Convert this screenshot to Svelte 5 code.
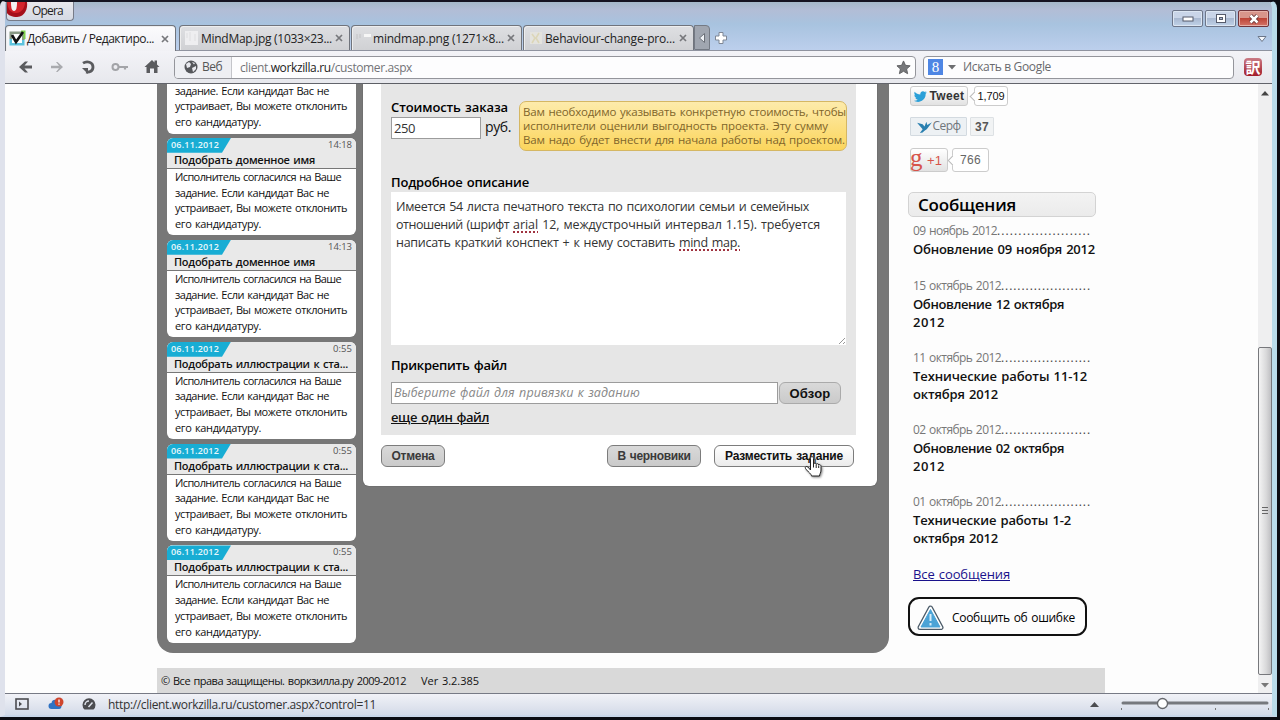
<script>
    // stretches or tightens a line of text to the given width
    function fit(node, width) {
        const natural = node.getBoundingClientRect().width
        const count = Array.from(node.textContent).length
        node.style.letterSpacing = (width - natural) / count + "px"
    }

    const tabs = [
        { title: "Добавить / Редактиро...", width: 127, icon: "check" },
        { title: "MindMap.jpg (1033×23...", width: 131, icon: "page" },
        { title: "mindmap.png (1271×8...", width: 131, icon: "faint" },
        { title: "Behaviour-change-pro...", width: 130, icon: "star" },
    ]

    const domain = { title: "Подобрать доменное имя", width: 141 }
    const pictures = { title: "Подобрать иллюстрации к ста...", width: 174 }

    const cards = [
        { ...domain, time: "14:18", timeWidth: 24 },
        { ...domain, time: "14:13", timeWidth: 24 },
        { ...pictures, time: "0:55", timeWidth: 19 },
        { ...pictures, time: "0:55", timeWidth: 19 },
        { ...pictures, time: "0:55", timeWidth: 19 },
    ]

    const notice = [
        ["Исполнитель согласился на Ваше", 166],
        ["задание. Если кандидат Вас не", 154],
        ["устраивает, Вы можете отклонить", 172],
        ["его кандидатуру.", 86],
    ]

    const tip = [
        ["Вам необходимо указывать конкретную стоимость, чтобы", 323],
        ["исполнители оценили выгодность проекта. Эту сумму", 305],
        ["Вам надо будет внести для начала работы над проектом.", 322],
    ]

    // third value marks a word underlined by the spell checker
    const description = [
        [["Имеется 54 листа печатного текста по психологии семьи и семейных", 413]],
        [["отношений (шрифт ", 117], ["arial", 25, true], [" 12, междустрочный интервал 1.15). требуется", 282]],
        [["написать краткий конспект + к нему составить ", 283], ["mind map.", 61, true]],
    ]

    const messages = [
        { date: "09 ноябрь 2012", dateWidth: 84, dotsWidth: 94, lines: [["Обновление 09 ноября 2012", 182]] },
        { date: "15 октябрь 2012", dateWidth: 88, dotsWidth: 90, lines: [["Обновление 12 октября", 151], ["2012", 32]] },
        { date: "11 октябрь 2012", dateWidth: 88, dotsWidth: 90, lines: [["Технические работы 11-12", 174], ["октября 2012", 85]] },
        { date: "02 октябрь 2012", dateWidth: 88, dotsWidth: 90, lines: [["Обновление 02 октября", 151], ["2012", 32]] },
        { date: "01 октябрь 2012", dateWidth: 88, dotsWidth: 90, lines: [["Технические работы 1-2", 158], ["октября 2012", 85]] },
    ]
</script>

<div class="window">
    <header>
        <div class="titlebar">
            <div class="opera">
                <svg width="21" height="16" viewBox="0 0 21 16">
                    <path d="M0 0h20c1 6-2 15-10 15C5 15 1 13 0 11z" fill="#a50f1a" />
                    <path d="M0 0h18c0 5-3 11-9 11S1 7 0 0z" fill="#d3242c" />
                    <path d="M4 0h6c0 5-.5 9-3 9S4 5 4 0z" fill="#f4f2f4" />
                </svg>
                <span class="t" use:fit={31}>Opera</span>
            </div>
            <div class="controls">
                <span class="control"><svg width="12" height="6" viewBox="0 0 12 6"><rect x="1" y="1" width="10" height="4" fill="#fff" stroke="#555b6b" /></svg></span>
                <span class="control"><svg width="12" height="9" viewBox="0 0 12 9"><rect x="1.500" y=".5" width="9" height="8" fill="#fff" stroke="#555b6b" /><rect x="4.500" y="3.500" width="3" height="2" fill="#aab8d0" stroke="#555b6b" /></svg></span>
                <span class="control close"><svg width="12" height="10" viewBox="0 0 12 10"><path d="M2.500 1.500l7 7M9.500 1.500l-7 7" stroke="#5a2a2c" stroke-width="4" /><path d="M2.500 1.500l7 7M9.500 1.500l-7 7" stroke="#fff" stroke-width="2.500" /></svg></span>
            </div>
        </div>

        <div class="tabs">
            {#each tabs as tab, i}
                <div class="tab" class:active={i == 0}>
                    <span class="favicon">
                        {#if tab.icon == "check"}
                            <svg width="17" height="17" viewBox="0 0 17 17">
                                <path d="M2 9v5h12v-5" fill="none" stroke="#5cc3de" stroke-width="3" />
                                <path d="M2 9V3h12v7" fill="none" stroke="#8a9a86" stroke-width="3" />
                                <path d="M12 1.500h3.500V9" fill="none" stroke="#7fd04a" stroke-width="2" />
                                <rect x="3" y="4" width="10" height="9" fill="#fff" />
                                <path d="M3 5l4 7 7-10" fill="none" stroke="#111" stroke-width="2.600" />
                            </svg>
                        {:else if tab.icon == "page"}
                            <svg width="16" height="16" viewBox="0 0 16 16"><rect x="1" y="1" width="13" height="14" fill="#eeeef0" /><path d="M3 3v5M6 2v9M11 4v7" stroke="#dedee0" /></svg>
                        {:else if tab.icon == "faint"}
                            <svg width="16" height="16" viewBox="0 0 16 16"><path d="M1 4v5M4 4v4" stroke="#cacacc" stroke-width="1.500" /><rect x="8" y="4" width="7" height="3" fill="#f6f6f6" /></svg>
                        {:else}
                            <svg width="16" height="16" viewBox="0 0 16 16"><rect x="2" y="2" width="12" height="12" fill="#e4e3de" /><path d="M4 4l3 4-3 5M11 3L8 8l3 5" fill="none" stroke="#dcd6b8" stroke-width="1.600" /></svg>
                        {/if}
                    </span>
                    <span class="t" use:fit={tab.width}>{tab.title}</span>
                    <svg class="cross" width="8" height="8" viewBox="0 0 8 8"><path d="M1 1l6 6M7 1L1 7" stroke="#77787c" stroke-width="1.700" /></svg>
                </div>
            {/each}
            <div class="scroll"><svg width="8" height="12" viewBox="0 0 8 12"><path d="M6.500 1.500v9L1.500 6z" fill="#eef1f5" stroke="#6b7078" /></svg></div>
            <svg class="plus" width="14" height="14" viewBox="0 0 14 14"><path d="M5 1.500h4V5h3.500v4H9v3.500H5V9H1.500V5H5z" fill="#fff" stroke="#7f8795" /></svg>
            <svg class="chevron" width="10" height="8" viewBox="0 0 10 8"><path d="M1 1.500h8L5 6.500z" fill="#f5f8fc" stroke="#6c7789" /></svg>
        </div>

        <div class="toolbar">
            <div class="nav">
                <svg width="16" height="14" viewBox="0 0 16 14"><path d="M1 7l6-5.500h3L6.500 5.500H14v3H6.500L10 12.500H7z" fill="#5a5b5e" /></svg>
                <svg width="16" height="14" viewBox="0 0 16 14"><path d="M14 7L8.500 2H7l3 3.800H2v2.400h8L7 12h1.500z" fill="#a9aaae" /></svg>
                <svg width="16" height="16" viewBox="0 0 16 16"><path d="M3 4.200C7 1.500 13 3 13 8c0 4-3.500 5.500-7 5" fill="none" stroke="#5a5b5e" stroke-width="2.800" /><path d="M2 9h6v6z" fill="#5a5b5e" /></svg>
                <svg width="18" height="12" viewBox="0 0 18 12"><circle cx="4.500" cy="6" r="3" fill="none" stroke="#a3a4a8" stroke-width="2" /><path d="M7.500 6H17M14 6v2.500" stroke="#a3a4a8" stroke-width="2.200" /></svg>
                <svg width="16" height="15" viewBox="0 0 16 15"><path d="M8 1l2.500 2.500V1.500h2.500v4L15.500 8h-2v6H10V9.500H6V14H2.500V8h-2z" fill="#5a5b5e" /></svg>
            </div>
            <div class="address">
                <div class="badge">
                    <svg width="14" height="14" viewBox="0 0 14 14"><circle cx="7" cy="7" r="6.500" fill="#55575b" /><path d="M2 4l3-2 2 2-1 3-3 1zM8 8l4-2v3l-3 3zM8 2l3 1-1 1.500z" fill="#e8e9ee" /></svg>
                    <span class="t" use:fit={20}>Веб</span>
                </div>
                <div class="url"><span class="t" use:fit={172}>client.<b>workzilla.ru</b>/customer.aspx</span></div>
                <svg width="15" height="15" viewBox="0 0 16 16"><path d="M8 1l2.100 4.700 5 .5-3.800 3.400 1.100 5L8 12l-4.400 2.600 1.100-5L1 6.200l5-.5z" fill="#77787b" stroke="#5f6062" /></svg>
            </div>
            <div class="search">
                <span class="google">8</span>
                <svg width="8" height="5" viewBox="0 0 8 5"><path d="M0 0h8L4 4.500z" fill="#6d6e71" /></svg>
                <span class="t" use:fit={88}>Искать в Google</span>
            </div>
            <div class="translate">訳</div>
        </div>
    </header>

    <div class="view">
        <div class="page">
            <div class="content">
                <div class="board">
                    <aside class="cards">
                        <div class="card tail">
                            <div class="card-text">
                                {#each notice.slice(1) as [line, width]}
                                    <div><span class="t" use:fit={width}>{line}</span></div>
                                {/each}
                            </div>
                        </div>
                        {#each cards as card}
                            <div class="card">
                                <div class="card-head">
                                    <div class="stamp">
                                        <span class="date"><span class="t" use:fit={48}>06.11.2012</span></span>
                                        <span class="t time" use:fit={card.timeWidth}>{card.time}</span>
                                    </div>
                                    <span class="t card-title" use:fit={card.width}>{card.title}</span>
                                </div>
                                <div class="card-text">
                                    {#each notice as [line, width]}
                                        <div><span class="t" use:fit={width}>{line}</span></div>
                                    {/each}
                                </div>
                            </div>
                        {/each}
                    </aside>

                    <main>
                        <div class="form">
                            <div class="price">
                                <div class="amount">
                                    <div class="label"><span class="t" use:fit={117}>Стоимость заказа</span><i>*</i></div>
                                    <div class="sum"><div class="input"><span class="t" use:fit={21}>250</span></div><span class="t unit" use:fit={26}>руб.</span></div>
                                </div>
                                <div class="tip">
                                    {#each tip as [line, width]}
                                        <div><span class="t" use:fit={width}>{line}</span></div>
                                    {/each}
                                </div>
                            </div>
                            <div class="label"><span class="t" use:fit={138}>Подробное описание</span></div>
                            <div class="textarea">
                                {#each description as parts}
                                    <div class="row">
                                        {#each parts as [text, width, misspelt]}
                                            <span class="t" class:misspelt use:fit={width}>{text}</span>
                                        {/each}
                                    </div>
                                {/each}
                                <svg class="grip" width="8" height="8" viewBox="0 0 8 8"><path d="M1 7l6-6M5 7l2-2" stroke="#999" /></svg>
                            </div>
                            <div class="label attach"><span class="t" use:fit={116}>Прикрепить файл</span></div>
                            <div class="file">
                                <div class="input wide"><span class="t" use:fit={246}>Выберите файл для привязки к заданию</span></div>
                                <div class="button browse"><span class="t" use:fit={41}>Обзор</span></div>
                            </div>
                            <div class="more"><span class="t" use:fit={98}>еще один файл</span></div>
                        </div>
                        <div class="actions">
                            <div class="button cancel"><span class="t" use:fit={43}>Отмена</span></div>
                            <div class="button draft"><span class="t" use:fit={73}>В черновики</span></div>
                            <div class="button publish">
                                <span class="t" use:fit={118}>Разместить задание</span>
                                <svg class="hand" width="18" height="24" viewBox="0 0 18 24">
                                    <path d="M6.500 15V3.500c0-2.600 3-2.600 3 0V9c.5-1.300 2.500-1.200 2.700.3.700-1 2.300-.8 2.500.6 1-.7 2.300 0 2.300 1.600V15c0 3-1.500 4-1.500 6h-8C7.500 19 4 17 1.500 13.500c-.9-1.700 1-2.800 2.400-1.500z" fill="#fff" stroke="#222" />
                                    <path d="M9.500 9v3.500M12.200 9.500v3.500M14.700 10.500V13" stroke="#222" />
                                </svg>
                            </div>
                        </div>
                    </main>
                </div>

                <aside class="side">
                    <div class="share">
                        <div class="pill tweet">
                            <svg width="13" height="11" viewBox="0 0 24 20"><path d="M24 2.500l-2.500 2.600C22 14 14 20 7.500 20 4.500 20 2 19 0 17.800c2.500.2 5-.4 7-2-2-.1-4-1.500-4.500-3.500h2C2 11.500.6 9.500.6 7.300l2 .7C.5 6.500 0 3.500 1.300 1.300 4 4.500 7.500 6.300 11.700 6.500 10.500 1.500 16.500-2 20 1.600L23 .5l-2 2.700z" fill="#2ca0d8" /></svg>
                            <span class="t" use:fit={35}>Tweet</span>
                        </div>
                        <div class="count tweets"><span class="t" use:fit={27}>1,709</span></div>
                    </div>
                    <div class="share">
                        <div class="pill surf">
                            <svg width="15" height="13" viewBox="0 0 16 14"><path d="M0 3l6 1.500L8 7l2-5 1 3.500 5-3-4.500 6C9.500 11 8 11 6 13.500L3 14l3-4z" fill="#2a80b0" /></svg>
                            <span class="t" use:fit={28}>Серф</span>
                        </div>
                        <div class="count surfs"><span class="t" use:fit={14}>37</span></div>
                    </div>
                    <div class="share">
                        <div class="pill plusone"><span class="g">g</span><span class="t" use:fit={15}>+1</span></div>
                        <div class="count pluses"><span class="t" use:fit={21}>766</span></div>
                    </div>

                    <h2><span class="t" use:fit={98}>Сообщения</span></h2>
                    <div class="messages">
                        {#each messages as message}
                            <div class="message">
                                <div class="when"><span class="t" use:fit={message.dateWidth}>{message.date}</span><span class="t dots" use:fit={message.dotsWidth}>......................</span></div>
                                {#each message.lines as [line, width]}
                                    <div><span class="t" use:fit={width}>{line}</span></div>
                                {/each}
                            </div>
                        {/each}
                        <div class="all"><span class="t" use:fit={97}>Все сообщения</span></div>
                    </div>
                    <div class="report">
                        <svg width="27" height="26" viewBox="0 0 27 26">
                            <path d="M13.500 3L24 22.500H3z" fill="#4a5a68" stroke="#4a5a68" stroke-width="5" stroke-linejoin="round" />
                            <path d="M13.500 3L24 22.500H3z" fill="#fff" stroke="#fff" stroke-width="2.600" stroke-linejoin="round" />
                            <path d="M13.500 4.500L23 22H4z" fill="#4ba3d6" stroke="#4ba3d6" stroke-linejoin="round" />
                            <path d="M13.500 9v7M13.500 18v2.500" stroke="#d6ecf8" stroke-width="2" />
                        </svg>
                        <span class="t" use:fit={123}>Сообщить об ошибке</span>
                    </div>
                </aside>
            </div>
            <footer>
                <span class="t" use:fit={245}>© Все права защищены. воркзилла.ру 2009-2012</span>
                <span class="t" use:fit={58}>Ver 3.2.385</span>
            </footer>
        </div>
        <div class="scrollbar">
            <svg width="8" height="5" viewBox="0 0 8 5"><path d="M0 4.500h8L4 0z" fill="#444" /></svg>
            <div class="thumb"><svg width="8" height="8" viewBox="0 0 8 8"><path d="M1 .5h6M1 3.500h6M1 6.500h6" stroke="#666" /></svg></div>
            <svg width="8" height="5" viewBox="0 0 8 5"><path d="M0 0h8L4 4.500z" fill="#777" /></svg>
        </div>
    </div>

    <div class="status">
        <svg width="14" height="12" viewBox="0 0 14 12"><rect x="1" y="1" width="12" height="10" fill="none" stroke="#4b4c50" stroke-width="1.600" /><path d="M4 3.500v5L7 6z" fill="#4b4c50" /></svg>
        <svg width="16" height="14" viewBox="0 0 16 14"><path d="M3.500 12a3 3 0 0 1 0-6C4 2 9 2 10 5c4-.500 5 7 1 7z" fill="#2f73c4" /><circle cx="11" cy="5" r="4.500" fill="#cf452d" /><path d="M11 2.500v3M11 6.500v1.300" stroke="#fff" stroke-width="1.300" /></svg>
        <svg width="14" height="12" viewBox="0 0 14 12"><path d="M2.500 11.500a6.500 6.500 0 1 1 9 0z" fill="#4b4c50" /><path d="M3 7a4 4 0 0 1 4-4M6.500 9l4-4.500" stroke="#e0e3ec" stroke-width="1.500" fill="none" /></svg>
        <span class="t" use:fit={268}>http://client.workzilla.ru/customer.aspx?control=11</span>
        <svg class="up" width="9" height="5" viewBox="0 0 9 5"><path d="M0 5h9L4.500 0z" fill="#4b4c50" /></svg>
        <svg width="148" height="14" viewBox="0 0 148 14">
            <path d="M2 6h144" stroke="#76787d" stroke-width="3" stroke-linecap="round" />
            <path d="M.500 11v2M94.500 11v2M147.500 11v2" stroke="#777" />
            <circle cx="41.500" cy="6.500" r="5" fill="#fff" stroke="#66686d" stroke-width="1.300" />
        </svg>
    </div>
</div>

<style>
    :global(body) {
        background: #0b0c12;
    }
    .window {
        width: 1277px;
        height: 717px;
        border: solid #c9d6e8;
        border-width: 0 5px 2px 5px;
        border-left-color: #dfe2ec;
        border-right-color: #b9dcea;
        border-top: 2px solid #15131f;
        border-radius: 6px 8px 0 0;
        overflow: hidden;
        display: flex;
        flex-direction: column;
        background: #fff;
        font-family: "Open Sans", "Noto Sans", sans-serif;
        font-size: 12px;
        color: #222;
    }
    .window *, .window {
        box-sizing: border-box;
    }
    .t {
        display: inline-block;
        white-space: pre;
        flex: none;
    }
    svg {
        display: block;
        flex: none;
    }
    header {
        background: linear-gradient(#a5b8c8, #b2bdd6 8px, #a8c3df 22px, #bccfec 48px);
        flex: none;
    }
    .titlebar {
        height: 23px;
        display: flex;
        justify-content: space-between;
    }
    .opera {
        width: 68px;
        height: 19px;
        border: 1px solid #777b88;
        border-top: 0;
        border-radius: 0 0 4px 4px;
        background: linear-gradient(#e9e8ec, #d5dae4);
        display: flex;
        gap: 4px;
        line-height: 17px;
        margin-left: 1px;
    }
    .controls {
        display: flex;
        gap: 2px;
        padding: 8px 3px 0 0;
    }
    .control {
        width: 31px;
        height: 17px;
        border: 1px solid #6d7689;
        border-radius: 2px;
        background: linear-gradient(#c9d5e8 50%, #a9b9d1 50%, #c0d2e8);
        box-shadow: inset 0 0 0 1px #dce6f2;
        display: flex;
        align-items: center;
        justify-content: center;
    }
    .close {
        background: linear-gradient(#d8958b 50%, #bd4437 50%, #d47468);
        border-color: #70333a;
        box-shadow: inset 0 0 0 1px #e5b0a8;
    }
    .tabs {
        height: 26px;
        display: flex;
        align-items: stretch;
        border-bottom: 1px solid #8f939f;
    }
    .tab {
        width: 171px;
        height: 25px;
        margin-right: 1px;
        border: 1px solid #70747c;
        border-bottom: 0;
        border-radius: 4px 4px 0 0;
        background: linear-gradient(#dedfe2, #d0d1d4);
        display: flex;
        align-items: center;
        padding-left: 4px;
        color: #222;
        box-shadow: inset 1px 1px 0 #eee;
    }
    .tab.active {
        height: 26px;
        background: linear-gradient(#fbfbfd, #f1f1f5);
        margin-right: 3px;
        padding-left: 3px;
    }
    .favicon {
        width: 17px;
        flex: none;
    }
    .tab.active .favicon {
        width: 18px;
    }
    .cross {
        margin-left: auto;
        margin-right: 6px;
    }
    .scroll {
        width: 16px;
        border: 1px solid #747a84;
        border-radius: 0 4px 0 0;
        background: #a0a6b0;
        display: flex;
        align-items: center;
        justify-content: center;
        margin-left: -1px;
    }
    .plus {
        margin: 6px 0 0 4px;
    }
    .chevron {
        margin: 10px 5px 0 auto;
    }
    .toolbar {
        height: 33px;
        background: linear-gradient(#f3f3f7, #e7e8ed);
        border-bottom: 1px solid #62646b;
        display: flex;
        align-items: center;
        color: #555;
    }
    .nav {
        width: 169px;
        display: flex;
        gap: 15px;
        padding-left: 13px;
        align-items: center;
        padding-bottom: 1px;
        flex: none;
    }
    .address, .search {
        height: 23px;
        border: 1px solid #94959b;
        border-radius: 4px;
        background: #fdfdfe;
        display: flex;
        align-items: center;
        flex: none;
    }
    .address {
        width: 742px;
        padding-right: 4px;
    }
    .badge {
        width: 57px;
        height: 21px;
        background: #eeeff3;
        border-right: 1px solid #c4c5ca;
        border-radius: 3px 0 0 3px;
        display: flex;
        align-items: center;
        gap: 4px;
        padding-left: 9px;
    }
    .url {
        flex: 1;
        padding-left: 8px;
        color: #727377;
    }
    .url b {
        font-weight: 400;
        color: #222;
    }
    .search {
        width: 311px;
        margin-left: 7px;
        padding-left: 4px;
        color: #68696d;
    }
    .google {
        width: 15px;
        height: 16px;
        background: #4e86e4;
        color: #fff;
        text-align: center;
        font: 15px/16px "Liberation Serif", serif;
        margin-right: 5px;
    }
    .badge .t, .url .t, .search .t {
        line-height: 16px;
    }
    .search .t {
        margin-left: 7px;
    }
    .translate {
        width: 18px;
        height: 18px;
        margin-left: 10px;
        border-radius: 4px;
        background: linear-gradient(#c97b85, #a31d2a);
        color: #fff;
        font: bold 15px/18px "Noto Sans CJK JP", sans-serif;
        text-align: center;
    }
    .view {
        flex: 1;
        min-height: 0;
        display: flex;
        color: #111;
        word-spacing: 1px;
    }
    .page {
        flex: 1;
        padding-left: 152px;
        background: #fdfdfd;
    }
    .content {
        height: 569px;
        display: flex;
        gap: 19px;
    }
    .board {
        width: 732px;
        height: 569px;
        background: #777;
        border-radius: 0 0 16px 16px;
        padding-left: 10px;
        display: flex;
        align-items: flex-start;
        gap: 7px;
    }
    .cards {
        width: 189px;
        height: 569px;
        padding-bottom: 10px;
        display: flex;
        flex-direction: column;
        justify-content: flex-end;
        gap: 4.300px;
        flex: none;
    }
    .card {
        height: 97.600px;
        border-radius: 6px;
        background: #fff;
        overflow: hidden;
        flex: none;
        font-size: 11px;
    }
    .card.tail {
        height: 50px;
        border-radius: 0 0 6px 6px;
    }
    .tail .card-text {
        margin-top: -1px;
    }
    .card-head {
        height: 31px;
        background: #e9e9e9;
        border-bottom: 1px solid #777;
    }
    .stamp {
        height: 15px;
        display: flex;
        justify-content: space-between;
        padding-right: 4px;
        line-height: 14px;
        font-size: 9.500px;
    }
    .date {
        width: 64px;
        height: 15px;
        padding-left: 4px;
        background: #18add4;
        clip-path: polygon(0 0, 100% 0, 55px 100%, 0 100%);
        color: #e9f8fc;
        font-weight: 600;
        font-size: 9px;
    }
    .time {
        color: #555;
    }
    .card-title {
        font-weight: 600;
        margin-left: 7px;
        line-height: 13px;
        vertical-align: top;
    }
    .card-text {
        padding-left: 8px;
        line-height: 15.800px;
    }
    .card-text div {
        height: 15.800px;
    }
    main {
        width: 514px;
        height: 402px;
        background: #fff;
        border-radius: 0 0 6px 6px;
        padding: 0 0 0 18px;
        box-shadow: 0 0 1px #333;
    }
    .form {
        width: 475px;
        height: 351px;
        background: #e6e6e6;
        padding: 14px 10px 0 10px;
        font-size: 13px;
    }
    .price {
        display: flex;
        height: 75px;
    }
    .amount {
        width: 128px;
        flex: none;
    }
    .label {
        font-weight: 600;
        line-height: 18px;
        height: 18px;
        color: #000;
    }
    .label .t {
        vertical-align: top;
    }
    .label i {
        color: #e06a78;
        font: 13px/14px "Open Sans", sans-serif;
        margin-left: 4px;
        vertical-align: top;
    }
    .sum {
        display: flex;
        gap: 4px;
        line-height: 22px;
    }
    .unit {
        font-size: 14px;
    }
    .input {
        width: 90px;
        height: 22px;
        border: 1px solid #9c9c9c;
        background: #fff;
        padding-left: 2px;
        line-height: 20px;
        color: #333;
        margin-top: 1px;
    }
    .input .t {
        line-height: 20px;
        vertical-align: top;
    }
    .tip {
        width: 328px;
        height: 50px;
        margin-top: 3px;
        flex: none;
        border: 1px solid #d5b763;
        border-radius: 7px;
        background: linear-gradient(#fdebab, #fbd55c);
        padding: 3px 0 0 3px;
        font-size: 11.500px;
        color: #80652a;
    }
    .tip div {
        height: 14px;
        line-height: 14px;
    }
    .textarea {
        position: relative;
        height: 153px;
        width: 455px;
        margin-top: 1px;
        background: #fff;
        padding: 6px 0 0 5px;
        color: #333;
        font-size: 12.500px;
    }
    .row {
        display: flex;
        height: 18px;
        line-height: 18px;
    }
    .misspelt {
        text-decoration: underline dotted #a03340 2px;
        text-underline-offset: 2px;
    }
    .grip {
        position: absolute;
        right: 0;
        bottom: 0;
    }
    .attach {
        margin-top: 11px;
    }
    .file {
        display: flex;
        margin-top: 8px;
        gap: 1px;
    }
    .input.wide {
        width: 387px;
        margin-top: 0;
        font-size: 12.500px;
        font-style: italic;
        color: #888;
    }
    .button {
        height: 22px;
        border: 1px solid #7c7c7c;
        border-radius: 6px;
        background: linear-gradient(#d9d9d9, #cacaca);
        display: flex;
        align-items: center;
        justify-content: center;
        font: bold 12px "Liberation Sans", sans-serif;
        color: #3a3a3a;
    }
    .browse {
        width: 62px;
        border-color: #aaa;
        font-size: 13px;
        color: #111;
    }
    .more {
        font-weight: 600;
        line-height: 18px;
        margin-top: 4px;
    }
    .more .t, .all .t {
        text-decoration: underline;
    }
    .actions {
        display: flex;
        padding-top: 10px;
    }
    .cancel {
        width: 64px;
    }
    .draft {
        width: 94px;
        margin-left: 162px;
    }
    .publish {
        position: relative;
        width: 140px;
        margin-left: 13px;
        background: linear-gradient(#fff, #ebebeb);
        color: #111;
    }
    .hand {
        position: absolute;
        left: 89px;
        top: 9px;
        filter: drop-shadow(1px 1px 1px #888);
    }
    .side {
        width: 200px;
        padding-top: 2px;
    }
    .share {
        display: flex;
        align-items: flex-start;
        padding-left: 2px;
        height: 31px;
        font-family: "Liberation Sans", sans-serif;
    }
    .pill, .count {
        height: 20px;
        border: 1px solid #ccc;
        border-radius: 3px;
        background: linear-gradient(#fff, #e2e2e2);
        display: flex;
        align-items: center;
        justify-content: center;
        gap: 3px;
    }
    .tweet {
        width: 58px;
        font-weight: bold;
        color: #333;
    }
    .count {
        position: relative;
        background: #fff;
    }
    .tweets::before, .pluses::before {
        content: "";
        position: absolute;
        left: -4px;
        top: 6px;
        width: 6px;
        height: 6px;
        border: solid #bbb;
        border-width: 0 0 1px 1px;
        background: #fff;
        transform: rotate(45deg);
    }
    .tweets {
        width: 34px;
        margin-left: 6px;
        font-size: 11px;
    }
    .surf {
        width: 57px;
        height: 19px;
        border-color: #d3dae0;
        background: #edf1f4;
        border-radius: 1px;
        color: #70767c;
        font-family: "Open Sans", sans-serif;
        gap: 1px;
    }
    .surf .t {
        margin-top: -2px;
    }
    .surfs {
        width: 24px;
        height: 19px;
        margin-left: 3px;
        border-color: #dde1e4;
        background: #f1f3f4;
        border-radius: 1px;
        font-weight: bold;
        color: #555;
    }
    .plusone {
        width: 38px;
        height: 24px;
        justify-content: flex-start;
        color: #d6534a;
        font-size: 13px;
    }
    .g {
        font: 25px/20px "Liberation Serif", serif;
        margin: -4px 2px 0 -1px;
        width: 12px;
    }
    .pluses {
        width: 37px;
        height: 24px;
        margin-left: 4px;
        color: #666;
    }
    .pluses::before {
        top: 8px;
    }
    h2 {
        width: 188px;
        height: 25px;
        margin: 13px 0 5px;
        padding-left: 9px;
        border: 1px solid #d3d3d3;
        border-radius: 5px;
        background: linear-gradient(#f3f3f3, #ebebeb);
        font-size: 17px;
        line-height: 23px;
        font-weight: 600;
        color: #000;
    }
    .messages {
        padding-left: 5px;
        font-size: 13px;
        font-weight: 600;
    }
    .message {
        line-height: 18px;
        margin-bottom: 18px;
    }
    .message:first-child {
        margin-bottom: 19px;
    }
    .message > div {
        height: 18px;
    }
    .when {
        display: flex;
        font-weight: 400;
        font-size: 12px;
        color: #777;
    }
    .dots {
        color: #444;
    }
    .all {
        height: 18px;
        line-height: 18px;
        font-weight: 400;
        color: #1a128c;
    }
    .report {
        width: 179px;
        height: 39px;
        margin-top: 14px;
        border: 2px solid #111;
        border-radius: 11px;
        display: flex;
        align-items: center;
        gap: 8px;
        padding: 2px 0 0 7px;
        color: #000;
        font-weight: 500;
    }
    footer {
        width: 948px;
        height: 25px;
        margin-top: 15px;
        padding: 0 0 1px 4px;
        background: #d9d9d9;
        display: flex;
        align-items: center;
        gap: 15px;
        font-size: 11px;
    }
    .scrollbar {
        width: 14px;
        background: #efeff0;
        display: flex;
        flex-direction: column;
        align-items: center;
        padding: 7px 0 5px;
    }
    .thumb {
        width: 14px;
        height: 328px;
        margin: auto 0 8px;
        border: 1px solid #77787c;
        border-radius: 2px;
        background: linear-gradient(90deg, #f4f4f4, #d9d9da 60%, #bfbfc2);
        display: flex;
        align-items: center;
        justify-content: center;
    }
    .status {
        height: 22px;
        flex: none;
        border-top: 1px solid #777a85;
        background: linear-gradient(#f1f2f7, #d3dae8);
        display: flex;
        align-items: center;
        padding: 0 3px 1px 10px;
        color: #333;
    }
    .status svg:nth-child(2) {
        margin: 0 18px 0 19px;
    }
    .status .t {
        margin-left: 12px;
    }
    .up {
        margin: 0 22px 0 auto;
    }
</style>
